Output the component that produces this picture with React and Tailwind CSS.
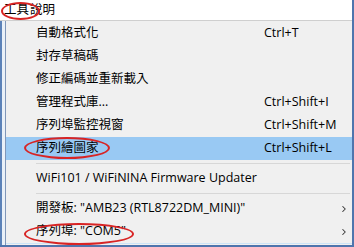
import { ChevronRight } from "lucide-react";

const FONT = "font-['Open_Sans','Noto_Sans_CJK_TC',sans-serif]";

function Item({ label, shortcut, active, arrow }) {
  return (
    <div
      className={`flex items-center h-[23px] pl-[30px] pr-[3px] ${
        active ? "bg-[#99c9f3]" : ""
      }`}
    >
      <span className="flex-1 text-[12.5px] text-black whitespace-nowrap">{label}</span>
      {shortcut && (
        <span className="w-[85px] text-[12.5px] text-black whitespace-nowrap">{shortcut}</span>
      )}
      {arrow && <ChevronRight size={10} strokeWidth={2.5} className="text-[#333]" />}
    </div>
  );
}

function Separator() {
  return (
    <div className="h-[7px] flex items-center pl-[30px] pr-[2px]">
      <div className="h-px flex-1 bg-[#d7d7d7]" />
    </div>
  );
}

export default function App() {
  return (
    <div className={`relative w-[354px] h-[247px] overflow-hidden bg-white ${FONT}`}>
      {/* menu bar */}
      <div className="flex items-center h-[21px] pl-[4px] gap-[1px] bg-white border-b border-[#cfcfcf] text-[12.5px] text-black">
        <span>工具</span>
        <span>說明</span>
      </div>

      <div className="flex h-[226px]">
        {/* window behind */}
        <div className="w-[6px] bg-[#e9f0f8] border-l-[2px] border-[#5b82b8] border-r border-r-[#7f96b8]" />
        {/* dropdown */}
        <div className="flex-1 flex flex-col bg-[#f0f0f0] pt-[1px]">
          <Item label="自動格式化" shortcut="Ctrl+T" />
          <Item label="封存草稿碼" />
          <Item label="修正編碼並重新載入" />
          <Item label="管理程式庫..." shortcut="Ctrl+Shift+I" />
          <Item label="序列埠監控視窗" shortcut="Ctrl+Shift+M" />
          <Item label="序列繪圖家" shortcut="Ctrl+Shift+L" active />
          <Separator />
          <Item label="WiFi101 / WiFiNINA Firmware Updater" />
          <Separator />
          <Item label='開發板: "AMB23 (RTL8722DM_MINI)"' arrow />
          <Item label='序列埠: "COM5"' arrow />
          <div className="flex-1 border-t border-[#cde4f7]" />
        </div>
        <div className="w-[2px] bg-[#4f75ad]" />
      </div>
      <div className="absolute left-0 right-0 bottom-0 h-[2px] bg-[#4f75ad]" />
      <div className="absolute right-0 top-0 bottom-0 w-[2px] bg-[#4f75ad]" />

      {/* annotations */}
      <div className="absolute left-[1px] top-[2px] w-[39px] h-[18px] rounded-[50%] border-2 border-[#d82424]" />
      <div className="absolute left-[24px] top-[137px] w-[86px] h-[22px] rounded-[50%] border-2 border-[#d82424]" />
      <div className="absolute left-[24px] top-[223px] w-[110px] h-[22px] rounded-[50%] border-2 border-[#d82424]" />
    </div>
  );
}
